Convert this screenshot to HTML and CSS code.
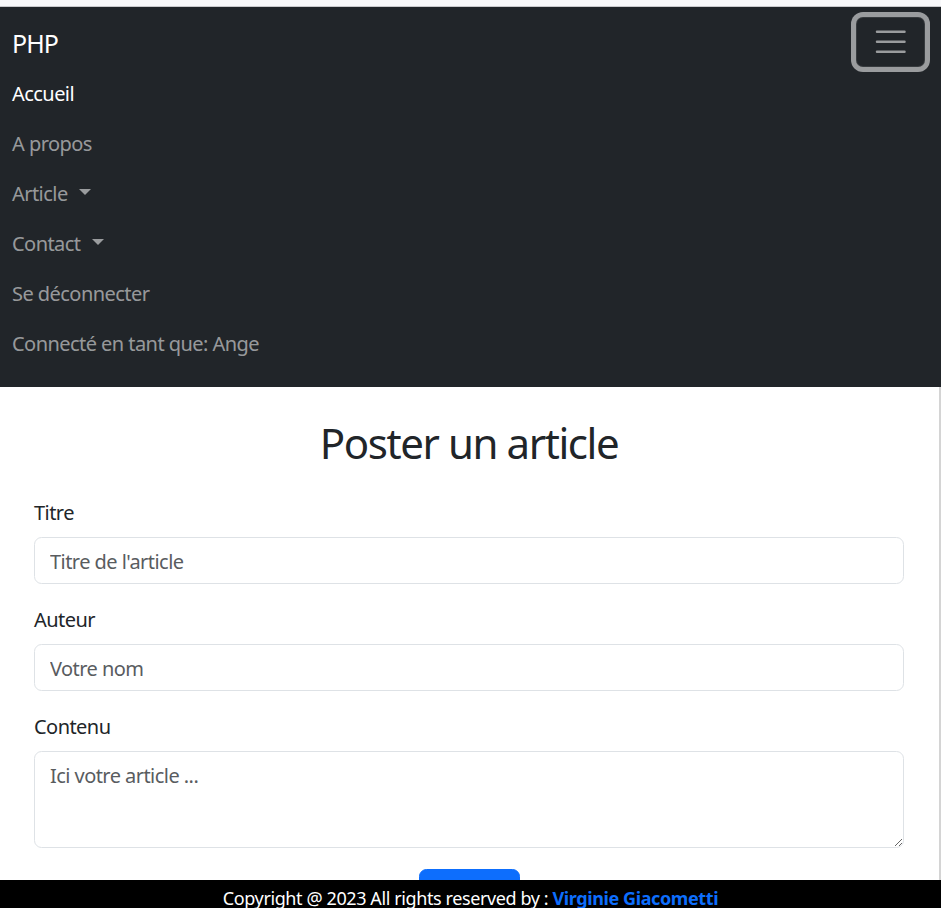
FILE: index.html
```html
<!DOCTYPE html>
<html lang="fr">
<head>
<meta charset="utf-8">
<title>Poster un article</title>
<link rel="stylesheet" href="styles.css">
</head>
<body>
<div class="topstrip"></div>
<nav class="navbar">
  <div class="nav-head">
    <a class="brand" href="#">PHP</a>
    <button class="toggler" type="button" aria-label="Menu">
      <svg class="toggler-icon" viewBox="0 0 30 30" width="37.5" height="37.5"><path d="M4 7h22M4 15h22M4 23h22" stroke="rgba(255,255,255,0.55)" stroke-width="2" stroke-linecap="round" fill="none"/></svg>
    </button>
  </div>
  <ul class="nav-list">
    <li><a class="nav-link active" href="#">Accueil</a></li>
    <li><a class="nav-link" href="#">A propos</a></li>
    <li><a class="nav-link dropdown" href="#">Article</a></li>
    <li><a class="nav-link dropdown" href="#">Contact</a></li>
    <li><a class="nav-link" href="#">Se déconnecter</a></li>
    <li><span class="nav-link">Connecté en tant que: Ange</span></li>
  </ul>
</nav>
<main class="content">
  <h1 class="title">Poster un article</h1>
  <form class="form">
    <div class="field">
      <label class="label" for="titre">Titre</label>
      <input class="control" id="titre" type="text" placeholder="Titre de l'article">
    </div>
    <div class="field">
      <label class="label" for="auteur">Auteur</label>
      <input class="control" id="auteur" type="text" placeholder="Votre nom">
    </div>
    <div class="field">
      <label class="label" for="contenu">Contenu</label>
      <textarea class="control area" id="contenu" placeholder="Ici votre article ..."></textarea>
    </div>
    <div class="actions">
      <button class="btn" type="submit">Envoyer</button>
    </div>
  </form>
</main>
<footer class="footer">
  Copyright @ 2023 All rights reserved by : <a class="footer-link" href="#">Virginie Giacometti</a>
</footer>
</body>
</html>
```
FILE: styles.css
```css
* { box-sizing: border-box; }
html, body { margin: 0; padding: 0; }
body {
  font-family: "Noto Sans", "Open Sans", sans-serif;
  font-size: 20px;
  line-height: 30px;
  letter-spacing: -0.55px;
  color: #212529;
  background: #fff;
  height: 908px;
  overflow: hidden;
}
.topstrip {
  height: 7px;
  background: #f8f8fa;
  border-bottom: 1px solid #c9c9cc;
}
.navbar {
  background: #212529;
  padding: 12px 16px 10px 12px;
}
.nav-head {
  display: flex;
  justify-content: space-between;
  align-items: center;
  height: 50px;
}
.brand {
  font-size: 25px;
  line-height: 37.5px;
  padding: 6.25px 0;
  letter-spacing: -0.9px;
  color: #fff;
  text-decoration: none;
}
.toggler {
  width: 69px;
  height: 50px;
  padding: 0;
  margin-top: -4px;
  display: flex;
  align-items: center;
  justify-content: center;
  background: transparent;
  border: 1px solid rgba(255,255,255,0.1);
  border-radius: 7px;
  box-shadow: 0 0 0 5px rgba(255,255,255,0.55);
}
.toggler-icon { display: block; }
.nav-list {
  list-style: none;
  margin: 0 0 8px 0;
  padding: 0;
}
.nav-link {
  display: inline-flex;
  align-items: center;
  padding: 10px 0;
  color: rgba(255,255,255,0.55);
  text-decoration: none;
}
.nav-link.active { color: #fff; }
.dropdown::after {
  content: "";
  margin-left: 11px;
  margin-top: -4px;
  border-top: 6px solid rgba(255,255,255,0.55);
  border-left: 6px solid transparent;
  border-right: 6px solid transparent;
}
.content {
  padding: 0 35px 0 34px;
  border-right: 2px solid #d4d4d4;
  height: 521px;
}
.title {
  margin: 0;
  padding-top: 31px;
  font-size: 42px;
  line-height: 50px;
  font-weight: 400;
  letter-spacing: -1.4px;
  text-align: center;
}
.form { margin-top: 29px; }
.field { margin-bottom: 20px; }
.label {
  display: block;
  padding-top: 2px;
  line-height: 28px;
  margin-bottom: 10px;
}
.control {
  display: block;
  width: 100%;
  height: 47px;
  padding: 8px 15px 6px;
  font: inherit;
  letter-spacing: -0.55px;
  color: #212529;
  border: 1px solid #dee2e6;
  border-radius: 7.5px;
  background: #fff;
}
.control::placeholder { color: #595c5f; }
.area { height: 97px; padding-top: 9px; resize: vertical; }
.actions { display: flex; justify-content: center; padding-top: 1px; }
.btn {
  width: 101px;
  height: 47px;
  font: inherit;
  color: #fff;
  background: #0d6efd;
  border: 1px solid #0d6efd;
  border-radius: 7.5px;
}
.footer {
  position: fixed;
  left: 0;
  right: 0;
  bottom: 0;
  height: 28px;
  overflow: hidden;
  padding-top: 5px;
  font-size: 18px;
  line-height: 27px;
  letter-spacing: -0.4px;
  background: #000;
  color: #fff;
  text-align: center;
}
.footer-link {
  color: #0d6efd;
  font-weight: 700;
  text-decoration: none;
}
```
